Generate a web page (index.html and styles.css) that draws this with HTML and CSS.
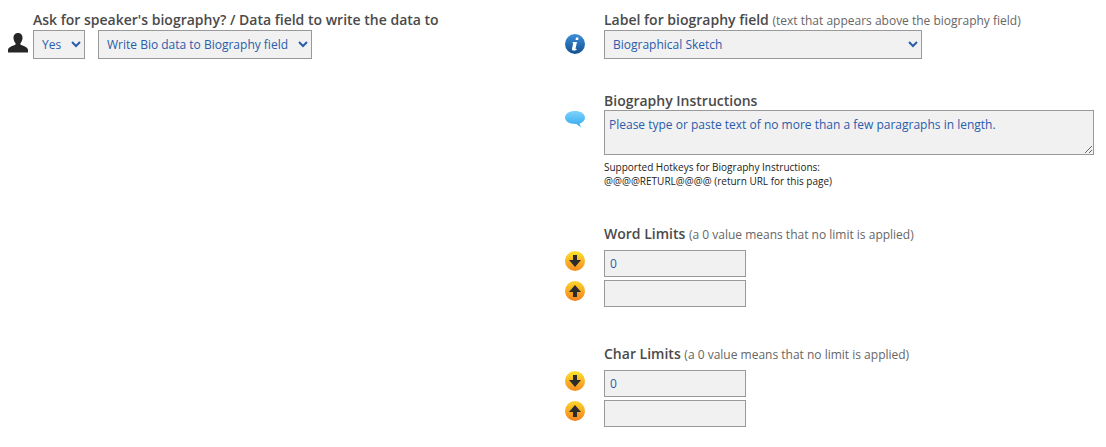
FILE: index.html
```html
<!DOCTYPE html>
<html lang="en">
<head>
<meta charset="utf-8">
<title>Biography settings</title>
<link rel="stylesheet" href="styles.css">
</head>
<body>
<main class="page">
  <section class="col col-left">
    <div class="field">
      <div class="icon-cell icon-left">
        <svg class="icon" width="20" height="20" viewBox="0 0 20 20"><path fill="#262626" d="M10 0c-3 0-4.600 2.200-4.500 5 .1 2 .8 3.800 1.900 5 .4.500.3 1.400-.2 1.800C6 12.700 1 13.600 0 16.500V19.500h20v-3c-1-2.900-6-3.800-7.200-4.700-.5-.4-.6-1.300-.2-1.800 1.100-1.200 1.800-3 1.900-5 .1-2.800-1.500-5-4.500-5z"/></svg>
      </div>
      <div class="body">
        <label class="label">Ask for speaker's biography? / Data field to write the data to</label>
        <div class="select-row">
          <select class="ctl sel-yes"><option>Yes</option></select>
          <select class="ctl sel-bio"><option>Write Bio data to Biography field</option></select>
        </div>
      </div>
    </div>
  </section>
  <section class="col col-right">
    <div class="field field-label">
      <div class="icon-cell">
        <svg class="icon" width="20" height="20" viewBox="0 0 20 20"><defs><linearGradient id="gi" x1="0" y1="0" x2="0" y2="1"><stop offset="0" stop-color="#3d8fd8"/><stop offset="1" stop-color="#124f92"/></linearGradient></defs><circle cx="10" cy="10" r="10" fill="url(#gi)"/><path fill="#fff" d="M11 3.500h2.600l-.5 2.500h-2.600zM8 8h4l-1.500 6.500c-.1.500.2.600 1.200.3l-.2 1.100c-1 .5-2 .7-3 .7-1.200 0-1.800-.6-1.500-1.800L8.200 9.300 7.300 9z"/></svg>
      </div>
      <div class="body">
        <label class="label">Label for biography field <span class="hint">(text that appears above the biography field)</span></label>
        <select class="ctl sel-wide"><option>Biographical Sketch</option></select>
      </div>
    </div>
    <div class="field field-instr">
      <div class="icon-cell icon-bubble">
        <svg class="icon" width="20" height="18" viewBox="0 0 20 18"><defs><linearGradient id="gb" x1="0" y1="0" x2="0" y2="1"><stop offset="0" stop-color="#7fd2fb"/><stop offset="1" stop-color="#2fa8ee"/></linearGradient></defs><path fill="url(#gb)" d="M10 0c5.500 0 10 2.700 10 6.500 0 3-2.400 5.200-5.500 6l1.500 4-4.500-3.600C5 13.200 0 10.500 0 6.500 0 2.700 4.500 0 10 0z"/></svg>
      </div>
      <div class="body">
        <label class="label label-tight">Biography Instructions</label>
        <textarea class="ctl area">Please type or paste text of no more than a few paragraphs in length.</textarea>
        <p class="note">Supported Hotkeys for Biography Instructions:<br>@@@@RETURL@@@@ (return URL for this page)</p>
      </div>
    </div>
    <div class="field field-limit field-word">
      <div class="icon-cell icon-stack">
        <svg class="icon" width="20" height="20" viewBox="0 0 20 20"><defs><linearGradient id="gd" x1="0" y1="0" x2="0" y2="1"><stop offset="0" stop-color="#fbe32c"/><stop offset="1" stop-color="#f58a1f"/></linearGradient></defs><circle cx="10" cy="10" r="10" fill="url(#gd)"/><path fill="#2b2b2b" d="M8 4h4v5h4l-6 7-6-7h4z"/></svg>
        <svg class="icon" width="20" height="20" viewBox="0 0 20 20"><defs><linearGradient id="gu" x1="0" y1="0" x2="0" y2="1"><stop offset="0" stop-color="#fbd52a"/><stop offset="1" stop-color="#f5811f"/></linearGradient></defs><circle cx="10" cy="10" r="10" fill="url(#gu)"/><path fill="#2b2b2b" d="M10 4l6 7h-4v5H8v-5H4z"/></svg>
      </div>
      <div class="body">
        <label class="label label-limit">Word Limits <span class="hint">(a 0 value means that no limit is applied)</span></label>
        <input class="ctl num" type="text" value="0">
        <input class="ctl num" type="text" value="">
      </div>
    </div>
    <div class="field field-limit field-char">
      <div class="icon-cell icon-stack">
        <svg class="icon" width="20" height="20" viewBox="0 0 20 20"><circle cx="10" cy="10" r="10" fill="url(#gd)"/><path fill="#2b2b2b" d="M8 4h4v5h4l-6 7-6-7h4z"/></svg>
        <svg class="icon" width="20" height="20" viewBox="0 0 20 20"><circle cx="10" cy="10" r="10" fill="url(#gu)"/><path fill="#2b2b2b" d="M10 4l6 7h-4v5H8v-5H4z"/></svg>
      </div>
      <div class="body">
        <label class="label label-limit">Char Limits <span class="hint">(a 0 value means that no limit is applied)</span></label>
        <input class="ctl num" type="text" value="0">
        <input class="ctl num" type="text" value="">
      </div>
    </div>
  </section>
</main>
</body>
</html>
```

FILE: styles.css
```css
* { box-sizing: border-box; }
html, body { margin: 0; padding: 0; background: #fff; overflow: hidden; }
body { font-family: "Open Sans", "Liberation Sans", sans-serif; color: #444; }
.page { display: grid; grid-template-columns: 557px 1fr; padding: 10px 12px 0 8px; }
.field { display: flex; }
.icon-cell { flex: none; width: 39px; padding-top: 24px; }
.icon-left { width: 25px; padding-top: 23px; }
.icon { display: block; }
.body { flex: 1; min-width: 0; }
.label { display: block; font-size: 14px; line-height: 19px; font-weight: 600; height: 20px; color: #4a4a4a; }
.label-tight { height: 19px; }
.label-limit { height: 26px; }
.hint { font-size: 12px; font-weight: 400; color: #666; }
.ctl { display: block; font-family: inherit; font-size: 12px; color: #2a5caa; background-color: #f1f1f1; border: 1px solid #999; border-radius: 0; outline: none; margin: 0; }
select.ctl { height: 29px; padding: 0 4px; }
.select-row { display: flex; gap: 13px; }
.sel-yes { width: 52px; }
.sel-bio { width: 214px; }
.sel-wide { width: 318px; }
.area { width: 490px; height: 45px; padding: 5px 4px; }
.note { margin: 5px 0 0; font-size: 10px; line-height: 14px; color: #222; }
.num { width: 142px; height: 27px; padding: 0 5px; margin-bottom: 3px; }
.field-instr { margin-top: 32px; }
.icon-bubble { padding-top: 20px; }
.field-word { margin-top: 36px; }
.field-char { margin-top: 34px; }
.icon-stack { display: flex; flex-direction: column; gap: 10px; padding-top: 27px; }
```
